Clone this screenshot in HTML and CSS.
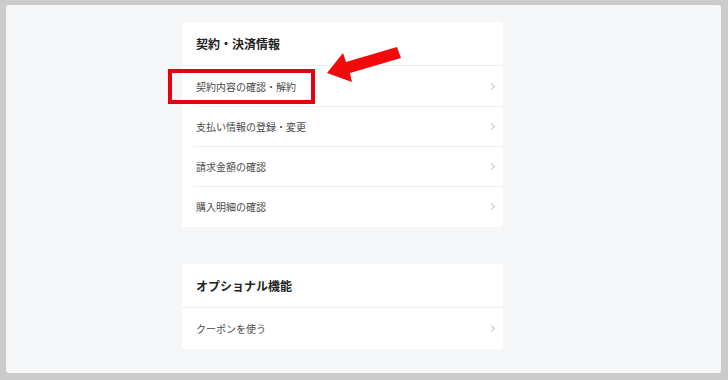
FILE: index.html
```html
<!DOCTYPE html>
<html lang="ja">

<head>
    <meta charset="UTF-8">
    <meta name="viewport" content="width=device-width, initial-scale=1.0">
    <title>契約・決済情報</title>
    <link rel="stylesheet" href="styles.css">
</head>

<body>
    <div class="frame">
        <div class="column">
            <section class="menu-card">
                <div class="menu-title">契約・決済情報</div>
                <ul class="menu-list">
                    <li class="menu-item"><span>契約内容の確認・解約</span><i class="chevron"></i></li>
                    <li class="menu-item"><span>支払い情報の登録・変更</span><i class="chevron"></i></li>
                    <li class="menu-item"><span>請求金額の確認</span><i class="chevron"></i></li>
                    <li class="menu-item"><span>購入明細の確認</span><i class="chevron"></i></li>
                </ul>
            </section>

            <section class="menu-card">
                <div class="menu-title">オプショナル機能</div>
                <ul class="menu-list">
                    <li class="menu-item"><span>クーポンを使う</span><i class="chevron"></i></li>
                </ul>
            </section>
        </div>

        <!-- 注目ポイントの強調 -->
        <div class="highlight-box"></div>
        <svg class="pointer-arrow" width="90" height="45" viewBox="320 42 90 45">
            <polygon points="327,73 343,53 346,62 397,47 401,58 350,73 352,82" fill="#f00a0a" />
        </svg>
    </div>
</body>

</html>
```

FILE: styles.css
```css
body {
    margin: 0;
    background: #cbcbcb;
    font-family: 'Noto Sans CJK JP', 'Noto Sans', sans-serif;
}

.frame {
    position: relative;
    margin: 5px 7px 0 6px;
    height: 368px;
    background: #f5f6f8;
    border-radius: 3px;
    padding-top: 17px;
    box-sizing: border-box;
}

.column {
    width: 321px;
    margin-left: 176px;
    display: flex;
    flex-direction: column;
    gap: 37px;
}

.menu-card {
    background: #fff;
    border-radius: 3px;
}

.menu-title {
    height: 43px;
    padding-left: 14px;
    display: flex;
    align-items: center;
    font-size: 12px;
    font-weight: bold;
    color: #222;
    border-bottom: 1px solid #eceef1;
}

.menu-list {
    list-style: none;
    margin: 0;
    padding: 0 0 1px;
}

.menu-item {
    box-sizing: border-box;
    height: 40px;
    margin-left: 11px;
    padding: 0 9px 0 3px;
    display: flex;
    align-items: center;
    justify-content: space-between;
    font-size: 10px;
    color: #4a4a4a;
}

.menu-item + .menu-item {
    border-top: 1px solid #eceef1;
}

.chevron {
    width: 4px;
    height: 4px;
    border-top: 1px solid #c4c6ca;
    border-right: 1px solid #c4c6ca;
    transform: rotate(45deg);
}

.highlight-box {
    position: absolute;
    left: 162px;
    top: 64px;
    width: 139px;
    height: 27px;
    border: 4px solid #e8000e;
}

.pointer-arrow {
    position: absolute;
    left: 314px;
    top: 37px;
}
```
